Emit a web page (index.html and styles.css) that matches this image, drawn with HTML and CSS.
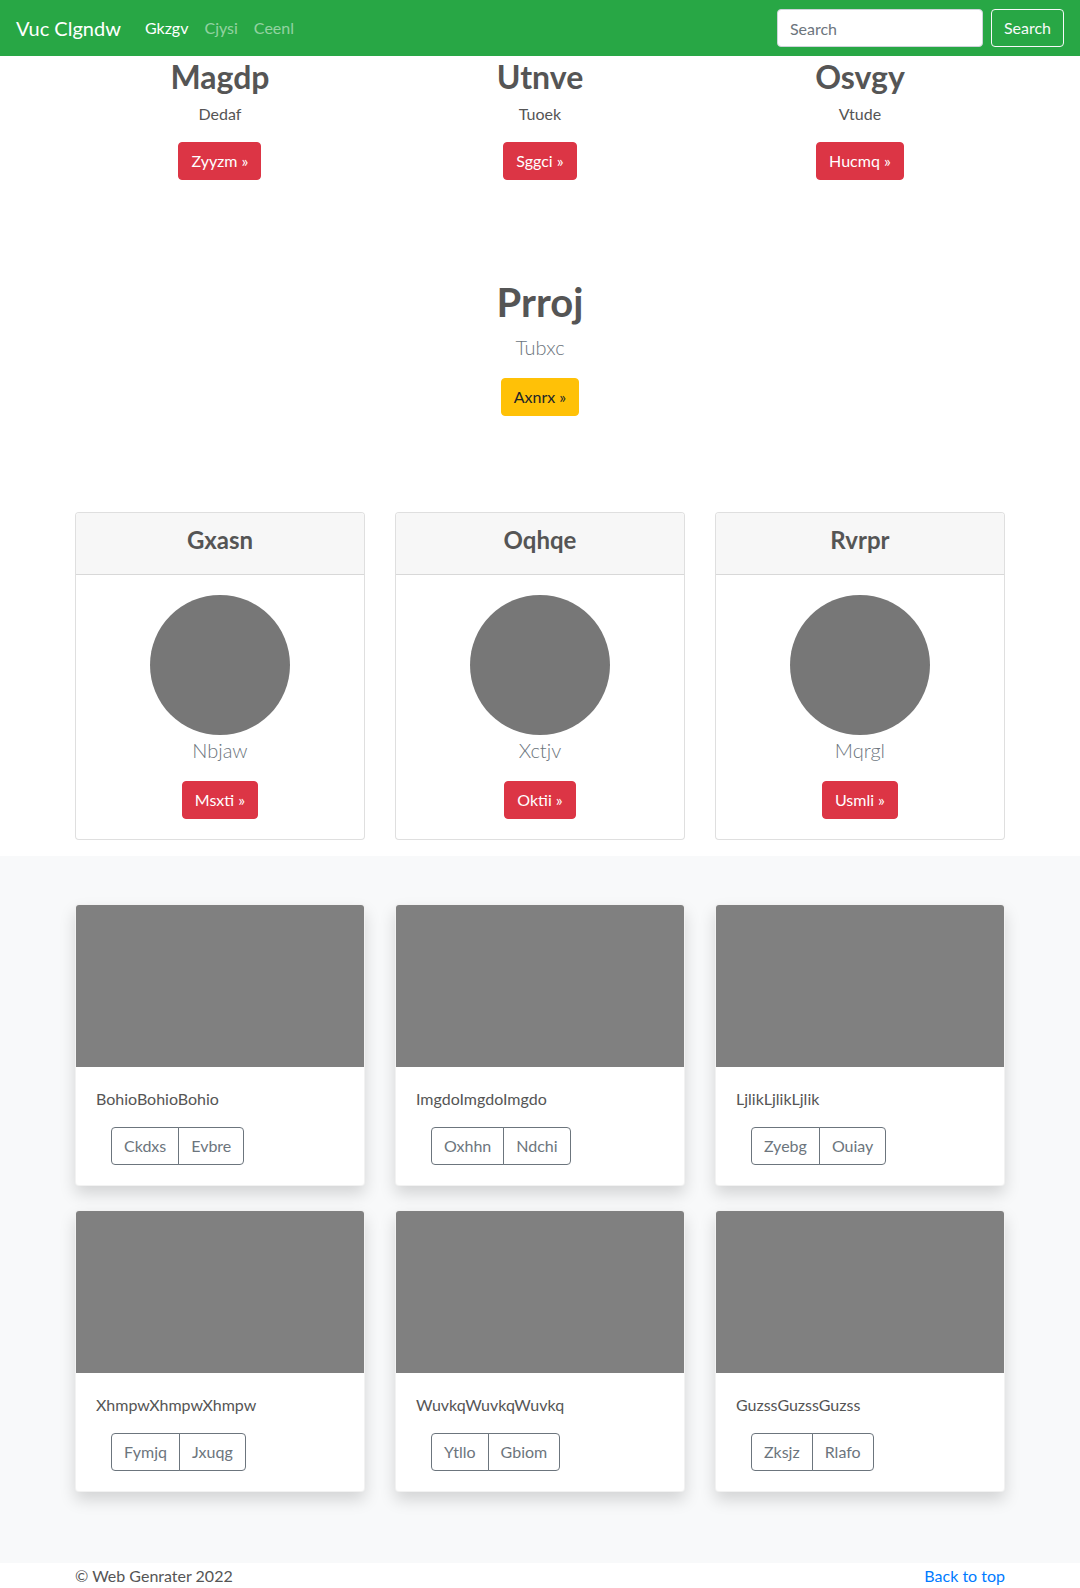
FILE: index.html
```html
<!DOCTYPE html>
<html lang="en">
<head>
<meta charset="utf-8">
<title>Vuc Clgndw</title>
<link rel="stylesheet" href="styles.css">
</head>
<body>
<nav class="navbar">
  <a class="brand" href="#">Vuc Clgndw</a>
  <ul class="nav-links">
    <li><a class="nav-link active" href="#">Gkzgv</a></li>
    <li><a class="nav-link" href="#">Cjysi</a></li>
    <li><a class="nav-link" href="#">Ceenl</a></li>
  </ul>
  <form class="search-form">
    <input class="search-input" type="text" placeholder="Search">
    <button class="btn btn-outline-light" type="button">Search</button>
  </form>
</nav>

<main>
  <section class="container">
    <div class="row">
      <div class="col feature">
        <h2 class="feature-title">Magdp</h2>
        <p class="feature-text">Dedaf</p>
        <div class="btn-wrap"><a class="btn btn-danger" href="#">Zyyzm »</a></div>
      </div>
      <div class="col feature">
        <h2 class="feature-title">Utnve</h2>
        <p class="feature-text">Tuoek</p>
        <div class="btn-wrap"><a class="btn btn-danger" href="#">Sggci »</a></div>
      </div>
      <div class="col feature">
        <h2 class="feature-title">Osvgy</h2>
        <p class="feature-text">Vtude</p>
        <div class="btn-wrap"><a class="btn btn-danger" href="#">Hucmq »</a></div>
      </div>
    </div>
  </section>

  <section class="hero">
    <h1 class="hero-title">Prroj</h1>
    <p class="lead">Tubxc</p>
    <div class="btn-wrap"><a class="btn btn-warning" href="#">Axnrx »</a></div>
  </section>

  <section class="container">
    <div class="row">
      <div class="col">
        <div class="card profile-card">
          <div class="card-header"><h4 class="card-heading">Gxasn</h4></div>
          <div class="card-body">
            <div class="avatar"></div>
            <p class="lead">Nbjaw</p>
            <div class="btn-wrap flush"><a class="btn btn-danger" href="#">Msxti »</a></div>
          </div>
        </div>
      </div>
      <div class="col">
        <div class="card profile-card">
          <div class="card-header"><h4 class="card-heading">Oqhqe</h4></div>
          <div class="card-body">
            <div class="avatar"></div>
            <p class="lead">Xctjv</p>
            <div class="btn-wrap flush"><a class="btn btn-danger" href="#">Oktii »</a></div>
          </div>
        </div>
      </div>
      <div class="col">
        <div class="card profile-card">
          <div class="card-header"><h4 class="card-heading">Rvrpr</h4></div>
          <div class="card-body">
            <div class="avatar"></div>
            <p class="lead">Mqrgl</p>
            <div class="btn-wrap flush"><a class="btn btn-danger" href="#">Usmli »</a></div>
          </div>
        </div>
      </div>
    </div>
  </section>

  <section class="album">
    <div class="container">
      <div class="row">
        <div class="col">
          <div class="card album-card">
            <div class="thumb"></div>
            <div class="card-body">
              <p class="card-text">BohioBohioBohio</p>
              <div class="btn-group"><button class="btn btn-outline-secondary" type="button">Ckdxs</button><button class="btn btn-outline-secondary" type="button">Evbre</button></div>
            </div>
          </div>
        </div>
        <div class="col">
          <div class="card album-card">
            <div class="thumb"></div>
            <div class="card-body">
              <p class="card-text">ImgdoImgdoImgdo</p>
              <div class="btn-group"><button class="btn btn-outline-secondary" type="button">Oxhhn</button><button class="btn btn-outline-secondary" type="button">Ndchi</button></div>
            </div>
          </div>
        </div>
        <div class="col">
          <div class="card album-card">
            <div class="thumb"></div>
            <div class="card-body">
              <p class="card-text">LjlikLjlikLjlik</p>
              <div class="btn-group"><button class="btn btn-outline-secondary" type="button">Zyebg</button><button class="btn btn-outline-secondary" type="button">Ouiay</button></div>
            </div>
          </div>
        </div>
        <div class="col">
          <div class="card album-card">
            <div class="thumb"></div>
            <div class="card-body">
              <p class="card-text">XhmpwXhmpwXhmpw</p>
              <div class="btn-group"><button class="btn btn-outline-secondary" type="button">Fymjq</button><button class="btn btn-outline-secondary" type="button">Jxuqg</button></div>
            </div>
          </div>
        </div>
        <div class="col">
          <div class="card album-card">
            <div class="thumb"></div>
            <div class="card-body">
              <p class="card-text">WuvkqWuvkqWuvkq</p>
              <div class="btn-group"><button class="btn btn-outline-secondary" type="button">Ytllo</button><button class="btn btn-outline-secondary" type="button">Gbiom</button></div>
            </div>
          </div>
        </div>
        <div class="col">
          <div class="card album-card">
            <div class="thumb"></div>
            <div class="card-body">
              <p class="card-text">GuzssGuzssGuzss</p>
              <div class="btn-group"><button class="btn btn-outline-secondary" type="button">Zksjz</button><button class="btn btn-outline-secondary" type="button">Rlafo</button></div>
            </div>
          </div>
        </div>
      </div>
    </div>
  </section>
</main>

<footer class="footer">
  <div class="container footer-inner">
    <p class="copy">© Web Genrater 2022</p>
    <a class="back-top" href="#">Back to top</a>
  </div>
</footer>
</body>
</html>
```
FILE: styles.css
```css
* { box-sizing: border-box; }

body {
  margin: 0;
  font-family: Lato, "Noto Sans", sans-serif;
  font-size: 16px;
  line-height: 1.5;
  color: #555;
  background: #fff;
}

h1, h2, h4, p { margin: 0; }

a { text-decoration: none; }

/* Navbar */
.navbar {
  display: flex;
  align-items: center;
  height: 56px;
  padding: 8px 16px;
  background: #28a745;
}

.brand {
  color: #fff;
  font-size: 20px;
  line-height: 30px;
  margin-right: 16px;
}

.nav-links {
  display: flex;
  list-style: none;
  margin: 0;
  padding: 0;
  flex: 1;
}

.nav-link {
  display: block;
  padding: 8px;
  color: rgba(255, 255, 255, 0.5);
  font-size: 16px;
  line-height: 24px;
}

.nav-link.active { color: #fff; }

.search-form {
  display: flex;
  align-items: center;
}

.search-input {
  width: 206px;
  height: 38px;
  padding: 6px 12px;
  font-family: inherit;
  font-size: 16px;
  color: #495057;
  background: #fff;
  border: 1px solid #ced4da;
  border-radius: 4px;
  margin-right: 8px;
}

.search-input::placeholder { color: #6c757d; }

/* Buttons */
.btn {
  display: inline-block;
  font-family: inherit;
  font-size: 16px;
  line-height: 24px;
  padding: 6px 12px;
  border: 1px solid transparent;
  border-radius: 4px;
  cursor: pointer;
  text-align: center;
}

.btn-outline-light {
  color: #f8f9fa;
  background: transparent;
  border-color: #f8f9fa;
}

.btn-danger {
  color: #fff;
  background: #dc3545;
  border-color: #dc3545;
}

.btn-warning {
  color: #212529;
  background: #ffc107;
  border-color: #ffc107;
}

.btn-outline-secondary {
  color: #6c757d;
  background: transparent;
  border-color: #6c757d;
}

.btn-wrap {
  display: flex;
  justify-content: center;
  margin-bottom: 16px;
}

.btn-wrap.flush { margin-bottom: 0; }

/* Layout */
.container {
  width: 960px;
  margin: 0 auto;
  padding: 0 15px;
}

.row {
  display: flex;
  flex-wrap: wrap;
  margin: 0 -15px;
}

.col {
  width: 33.3333%;
  padding: 0 15px;
}

/* Features */
.feature { text-align: center; }

.feature-title {
  font-size: 32px;
  font-weight: 700;
  line-height: 1.2;
  padding-top: 2px;
  margin-bottom: 6px;
}

.feature-text { margin-bottom: 16px; }

/* Hero */
.hero {
  text-align: center;
  padding: 80px 0;
}

.hero-title {
  font-size: 40px;
  font-weight: 700;
  line-height: 1.2;
  padding-top: 2px;
  margin-bottom: 6px;
}

.lead {
  font-size: 20px;
  font-weight: 300;
  line-height: 30px;
  color: #6c757d;
  margin-bottom: 16px;
}

/* Cards */
.card {
  background: #fff;
  border: 1px solid rgba(0, 0, 0, 0.125);
  border-radius: 4px;
  overflow: hidden;
}

.profile-card {
  text-align: center;
  margin-bottom: 16px;
}

.card-header {
  padding: 12px 20px;
  background: #f7f7f7;
  border-bottom: 1px solid rgba(0, 0, 0, 0.125);
}

.card-heading {
  font-size: 24px;
  font-weight: 700;
  line-height: 1.2;
  padding-top: 1px;
  margin-bottom: 7px;
}

.card-body { padding: 20px; }

.avatar {
  width: 140px;
  height: 140px;
  border-radius: 50%;
  background: #777;
  margin: 0 auto;
}

/* Album */
.album {
  background: #f8f9fa;
  padding: 48px 0 47px;
}

.album-card {
  margin-bottom: 24px;
  border-color: rgba(0, 0, 0, 0.05);
  box-shadow: 0 8px 16px rgba(0, 0, 0, 0.15);
}

.thumb {
  height: 162px;
  background: #808080;
}

.card-text { margin-bottom: 16px; }

.btn-group {
  display: inline-flex;
  margin-left: 15px;
}

.btn-group .btn:first-child {
  border-top-right-radius: 0;
  border-bottom-right-radius: 0;
}

.btn-group .btn + .btn {
  margin-left: -1px;
  border-top-left-radius: 0;
  border-bottom-left-radius: 0;
}

/* Footer */
.footer { padding-top: 1px; }

.footer-inner {
  display: flex;
  justify-content: space-between;
}

.copy { color: #555; }

.back-top { color: #007bff; }
```
